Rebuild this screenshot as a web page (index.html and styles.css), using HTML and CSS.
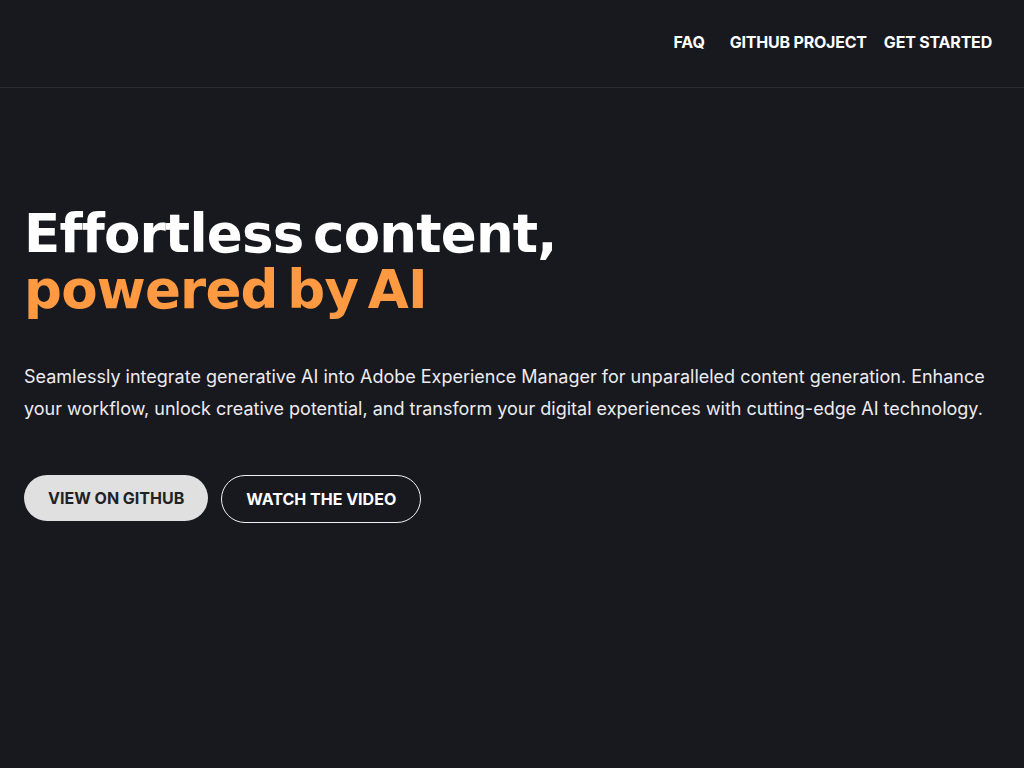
FILE: index.html
```html
<!DOCTYPE html>
<html lang="en">
<head>
    <meta charset="UTF-8">
    <meta name="viewport" content="width=device-width, initial-scale=1.0">
    <title>AEM Generative AI</title>
    <link rel="stylesheet" href="styles.css">
</head>
<body>
    <header class="site-header">
        <nav class="nav">
            <a href="#" class="nav-link nav-faq">FAQ</a>
            <a href="#" class="nav-link">GITHUB PROJECT</a>
            <a href="#" class="nav-link">GET STARTED</a>
        </nav>
    </header>

    <main class="hero">
        <h1 class="hero-title">
            Effortless content,<br>
            <span class="accent">powered by AI</span>
        </h1>
        <p class="hero-text">
            Seamlessly integrate generative AI into Adobe Experience Manager for unparalleled content generation. Enhance your workflow, unlock creative potential, and transform your digital experiences with cutting-edge AI technology.
        </p>
        <div class="hero-actions">
            <a href="#" class="btn btn-light">VIEW ON GITHUB</a>
            <a href="#" class="btn btn-outline">WATCH THE VIDEO</a>
        </div>
    </main>
</body>
</html>
```

FILE: styles.css
```css
:root {
    --bg: #18181f;
    --line: #2a2a33;
    --text: #ffffff;
    --body-text: #ececf0;
    --accent: #ff9a42;
    --btn-light: #e0e0e0;
    --btn-dark-text: #222226;
}

body {
    margin: 0;
    background-color: var(--bg);
    color: var(--text);
    font-family: Inter, 'Noto Sans', sans-serif;
}

a {
    color: inherit;
    text-decoration: none;
}

.site-header {
    height: 88px;
    border-bottom: 1px solid var(--line);
    display: flex;
    justify-content: flex-end;
    align-items: center;
    padding: 0 32px 4px;
    box-sizing: border-box;
}

.nav {
    display: flex;
    gap: 17px;
}

.nav-link {
    font-size: 16px;
    font-weight: 700;
    letter-spacing: -0.2px;
}

.nav-faq {
    margin-right: 8px;
}

.hero {
    padding: 118px 24px 0;
}

.hero-title {
    font-family: 'DejaVu Sans', sans-serif;
    font-weight: 700;
    font-size: 53px;
    line-height: 56px;
    letter-spacing: -0.8px;
    word-spacing: -8px;
    margin: 0 0 43px;
}

.accent {
    color: var(--accent);
}

.hero-text {
    font-size: 18px;
    line-height: 32px;
    color: var(--body-text);
    margin: 0 0 50px;
    max-width: 975px;
}

.hero-actions {
    display: flex;
    gap: 13px;
}

.btn {
    display: inline-flex;
    align-items: center;
    height: 46px;
    padding: 0 24px;
    border-radius: 24px;
    font-size: 16px;
    font-weight: 700;
    letter-spacing: 0;
    box-sizing: border-box;
}

.btn-light {
    background-color: var(--btn-light);
    color: var(--btn-dark-text);
}

.btn-outline {
    border: 1px solid #f0f0f0;
    color: var(--text);
    height: 48px;
}
```
